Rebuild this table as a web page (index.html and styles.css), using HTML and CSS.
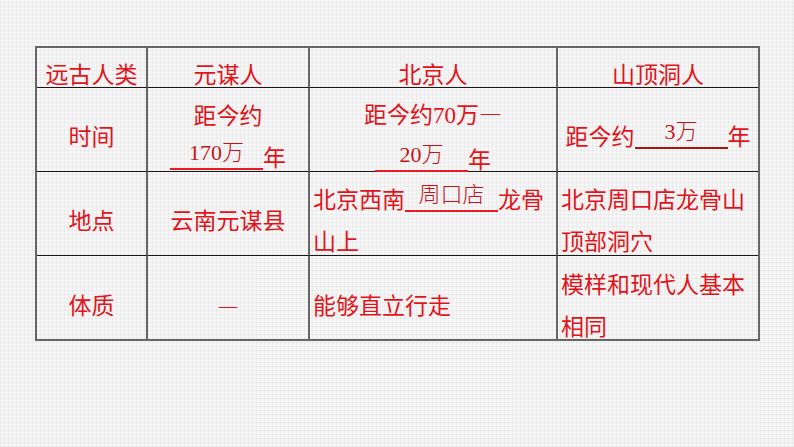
FILE: index.html
```html
<!DOCTYPE html>
<html lang="zh">
<head>
<meta charset="utf-8">
<title>远古人类</title>
<link rel="stylesheet" href="styles.css">
</head>
<body>
<div class="page">
  <div class="grid">
    <div class="cell head">远古人类</div>
    <div class="cell head">元谋人</div>
    <div class="cell head">北京人</div>
    <div class="cell head last">山顶洞人</div>

    <div class="cell"><div class="txt">时间</div></div>
    <div class="cell"><div class="txt">距今约<br><span class="blank">170万</span>年</div></div>
    <div class="cell"><div class="txt">距今约<span class="num">70</span>万—<br><span class="blank">20万</span>年</div></div>
    <div class="cell last"><div class="txt">距今约<span class="blank dark">3万</span>年</div></div>

    <div class="cell"><div class="txt">地点</div></div>
    <div class="cell"><div class="txt">云南元谋县</div></div>
    <div class="cell left"><div class="txt">北京西南<span class="blank">周口店</span>龙骨山上</div></div>
    <div class="cell left last"><div class="txt">北京周口店龙骨山顶部洞穴</div></div>

    <div class="cell bottom"><div class="txt">体质</div></div>
    <div class="cell bottom"><div class="txt dash">—</div></div>
    <div class="cell bottom left"><div class="txt">能够直立行走</div></div>
    <div class="cell bottom left last"><div class="txt">模样和现代人基本相同</div></div>
  </div>
</div>
</body>
</html>
```

FILE: styles.css
```css
html, body {
  margin: 0;
  padding: 0;
}
body {
  width: 794px;
  height: 447px;
  overflow: hidden;
  background-color: #f6f6f6;
  background-image:
    repeating-linear-gradient(90deg, rgba(0,0,0,0.035) 0 1px, transparent 1px 4px),
    repeating-linear-gradient(0deg, rgba(0,0,0,0.035) 0 1px, transparent 1px 4px);
  font-family: "Noto Sans CJK SC", "Noto Sans", sans-serif;
  color: #e0141b;
}
.page {
  padding: 46px 0 0 35px;
}
.grid {
  display: grid;
  grid-template-columns: 111px 162px 248px 200px;
  grid-template-rows: 40px 84px 84px 83px;
  width: max-content;
  border: 2px solid #666;
}
.cell {
  box-sizing: border-box;
  border-right: 2px solid #666;
  border-bottom: 1px solid #1a1a1a;
  display: flex;
  flex-direction: column;
  justify-content: center;
  text-align: center;
  font-size: 23px;
  line-height: 42px;
  padding: 11px 0 0 0;
  min-width: 0;
}
.cell.head {
  line-height: 28px;
  padding-top: 11px;
}
.cell.last {
  border-right: none;
}
.cell.bottom {
  border-bottom: none;
  padding-top: 12px;
}
.cell.left {
  text-align: left;
  padding-left: 3px;
}
.num {
  font-family: "Liberation Serif", serif;
  font-size: 23px;
}
.blank {
  display: inline-block;
  width: 93px;
  text-align: center;
  font-family: "Liberation Serif", "Noto Sans CJK SC", serif;
  font-size: 22px;
  font-weight: 300;
  line-height: 22px;
  padding-bottom: 4px;
  vertical-align: 6px;
  border-bottom: 2px solid #ea1a22;
  color: #c4141a;
}
.blank.dark {
  border-bottom-color: #a01818;
}
.dash {
  font-weight: 300;
}
```
